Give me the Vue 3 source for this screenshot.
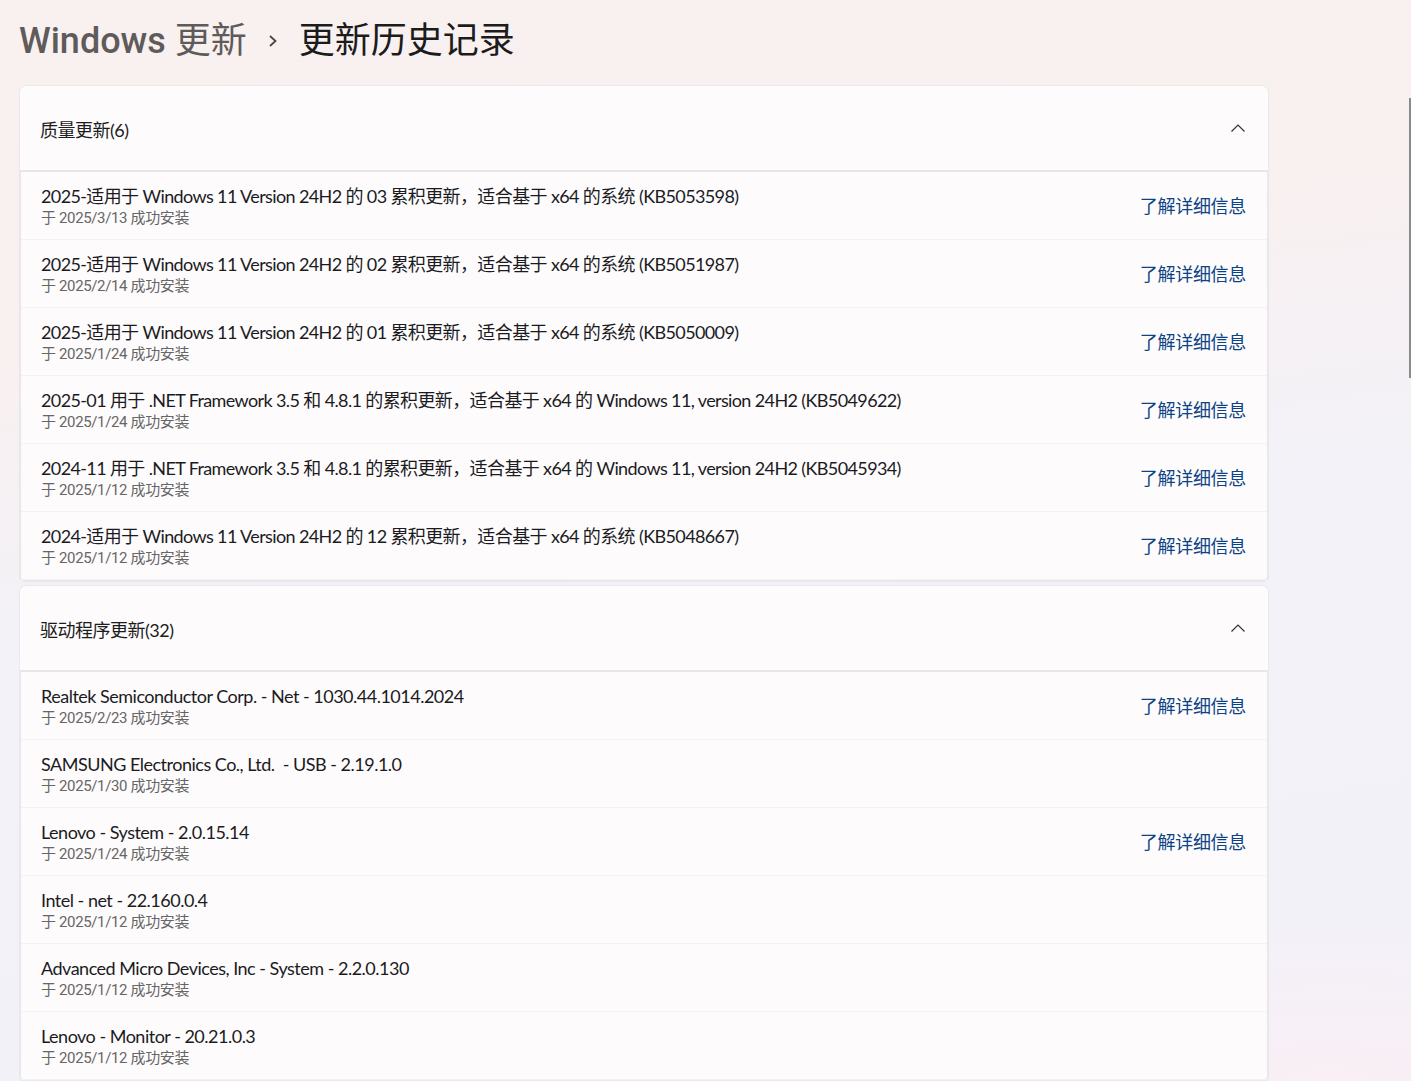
<script setup>
const quality = [
  { title: '2025-适用于 Windows 11 Version 24H2 的 03 累积更新，适合基于 x64 的系统 (KB5053598)', date: '于 2025/3/13 成功安装', link: true },
  { title: '2025-适用于 Windows 11 Version 24H2 的 02 累积更新，适合基于 x64 的系统 (KB5051987)', date: '于 2025/2/14 成功安装', link: true },
  { title: '2025-适用于 Windows 11 Version 24H2 的 01 累积更新，适合基于 x64 的系统 (KB5050009)', date: '于 2025/1/24 成功安装', link: true },
  { title: '2025-01 用于 .NET Framework 3.5 和 4.8.1 的累积更新，适合基于 x64 的 Windows 11, version 24H2 (KB5049622)', date: '于 2025/1/24 成功安装', link: true },
  { title: '2024-11 用于 .NET Framework 3.5 和 4.8.1 的累积更新，适合基于 x64 的 Windows 11, version 24H2 (KB5045934)', date: '于 2025/1/12 成功安装', link: true },
  { title: '2024-适用于 Windows 11 Version 24H2 的 12 累积更新，适合基于 x64 的系统 (KB5048667)', date: '于 2025/1/12 成功安装', link: true },
]

const drivers = [
  { title: 'Realtek Semiconductor Corp. - Net - 1030.44.1014.2024', date: '于 2025/2/23 成功安装', link: true },
  { title: 'SAMSUNG Electronics Co., Ltd.  - USB - 2.19.1.0', date: '于 2025/1/30 成功安装', link: false },
  { title: 'Lenovo - System - 2.0.15.14', date: '于 2025/1/24 成功安装', link: true },
  { title: 'Intel - net - 22.160.0.4', date: '于 2025/1/12 成功安装', link: false },
  { title: 'Advanced Micro Devices, Inc - System - 2.2.0.130', date: '于 2025/1/12 成功安装', link: false },
  { title: 'Lenovo - Monitor - 20.21.0.3', date: '于 2025/1/12 成功安装', link: false },
]

// the chinese-heavy titles run a little tighter than the latin-only ones
const groups = [
  { name: '质量更新(6)', items: quality, tight: true },
  { name: '驱动程序更新(32)', items: drivers, tight: false },
]
</script>

<template>
  <div class="page">
    <div class="scrollbar"></div>
    <h1 class="crumb">
      <span class="crumb__parent"><span class="crumb__latin">Windows</span> 更新</span>
      <svg class="crumb__sep" width="10" height="14" viewBox="0 0 10 14">
        <path d="M2 2l5.500 5L2 12" fill="none" stroke="#4a4646" stroke-width="1.800" />
      </svg>
      <span class="crumb__current">更新历史记录</span>
    </h1>

    <section v-for="group in groups" :key="group.name" class="card">
      <header class="card__head">
        <span class="card__name">{{ group.name }}</span>
        <svg class="card__chevron" width="16" height="10" viewBox="0 0 16 10">
          <path d="M1.500 8.500L8 2l6.500 6.500" fill="none" stroke="#333" stroke-width="1.200" />
        </svg>
      </header>
      <div class="card__body">
        <div v-for="item in group.items" :key="item.title" class="row">
          <div class="row__text">
            <div class="row__title" :class="{ 'row__title--tight': group.tight }">{{ item.title }}</div>
            <div class="row__date">{{ item.date }}</div>
          </div>
          <a v-if="item.link" class="row__link">了解详细信息</a>
        </div>
      </div>
    </section>
  </div>
</template>

<style scoped>
.page {
  position: relative;
  height: 1081px;
  overflow: hidden;
  box-sizing: border-box;
  padding: 0 143px 0 20px;
  font-family: Roboto, "Noto Sans CJK SC", sans-serif;
  color: #1c1c1c;
  background:
    radial-gradient(500px 160px at 1330px 1081px, #f9eff5 0%, rgba(249, 239, 245, 0) 100%),
    linear-gradient(172deg, #f8f1f0 0%, #f9f0f0 28%, #f2f2f8 52%, #f3f1f8 100%);
}

.scrollbar {
  position: absolute;
  top: 98px;
  right: 0;
  width: 2px;
  height: 280px;
  background: #8a8a8e;
}

.crumb {
  display: flex;
  align-items: center;
  height: 82px;
  margin: 0 0 4px -1px;
  font-size: 36px;
  font-weight: 400;
  line-height: 1;
}

.crumb__parent {
  color: #5f5b5b;
}

.crumb__latin {
  font-weight: 500;
}

.crumb__sep {
  margin: 0 21px 0 21px;
}

.card {
  margin-bottom: 6px;
  border-radius: 6px;
  background: #fdfbfc;
  box-shadow: 0 0 0 1px #ebe9ec, 0 1px 1px 1px #e6e5ea;
}

.card__head {
  display: flex;
  align-items: center;
  justify-content: space-between;
  height: 84px;
  padding: 0 22px 0 20px;
  border-bottom: 2px solid #e8e6e7;
}

.card__name {
  font-family: Lato, "Noto Sans CJK SC", sans-serif;
  font-size: 18px;
  letter-spacing: -0.5px;
  margin-top: 2px;
}

.card__body {
  border-left: 1px solid #e8e6ea;
  border-right: 1px solid #e8e6ea;
}

.row {
  display: flex;
  align-items: center;
  justify-content: space-between;
  box-sizing: border-box;
  height: 68px;
  padding: 0 21px 0 20px;
  border-bottom: 1px solid #f3f1f3;
}

.row__text {
  margin-top: 2px;
}

.row__title {
  font-family: Lato, "Noto Sans CJK SC", sans-serif;
  font-size: 18px;
  line-height: 22px;
  letter-spacing: -0.5px;
  color: #1b1b1f;
  white-space: pre;
}

.row__title--tight {
  letter-spacing: -0.62px;
}

.row__date {
  font-size: 15px;
  line-height: 20px;
  margin-top: 1px;
  letter-spacing: -0.36px;
  color: #666;
}

.row__link {
  font-size: 18px;
  line-height: 22px;
  margin-top: 2px;
  letter-spacing: -0.3px;
  color: #0c4385;
}
</style>
